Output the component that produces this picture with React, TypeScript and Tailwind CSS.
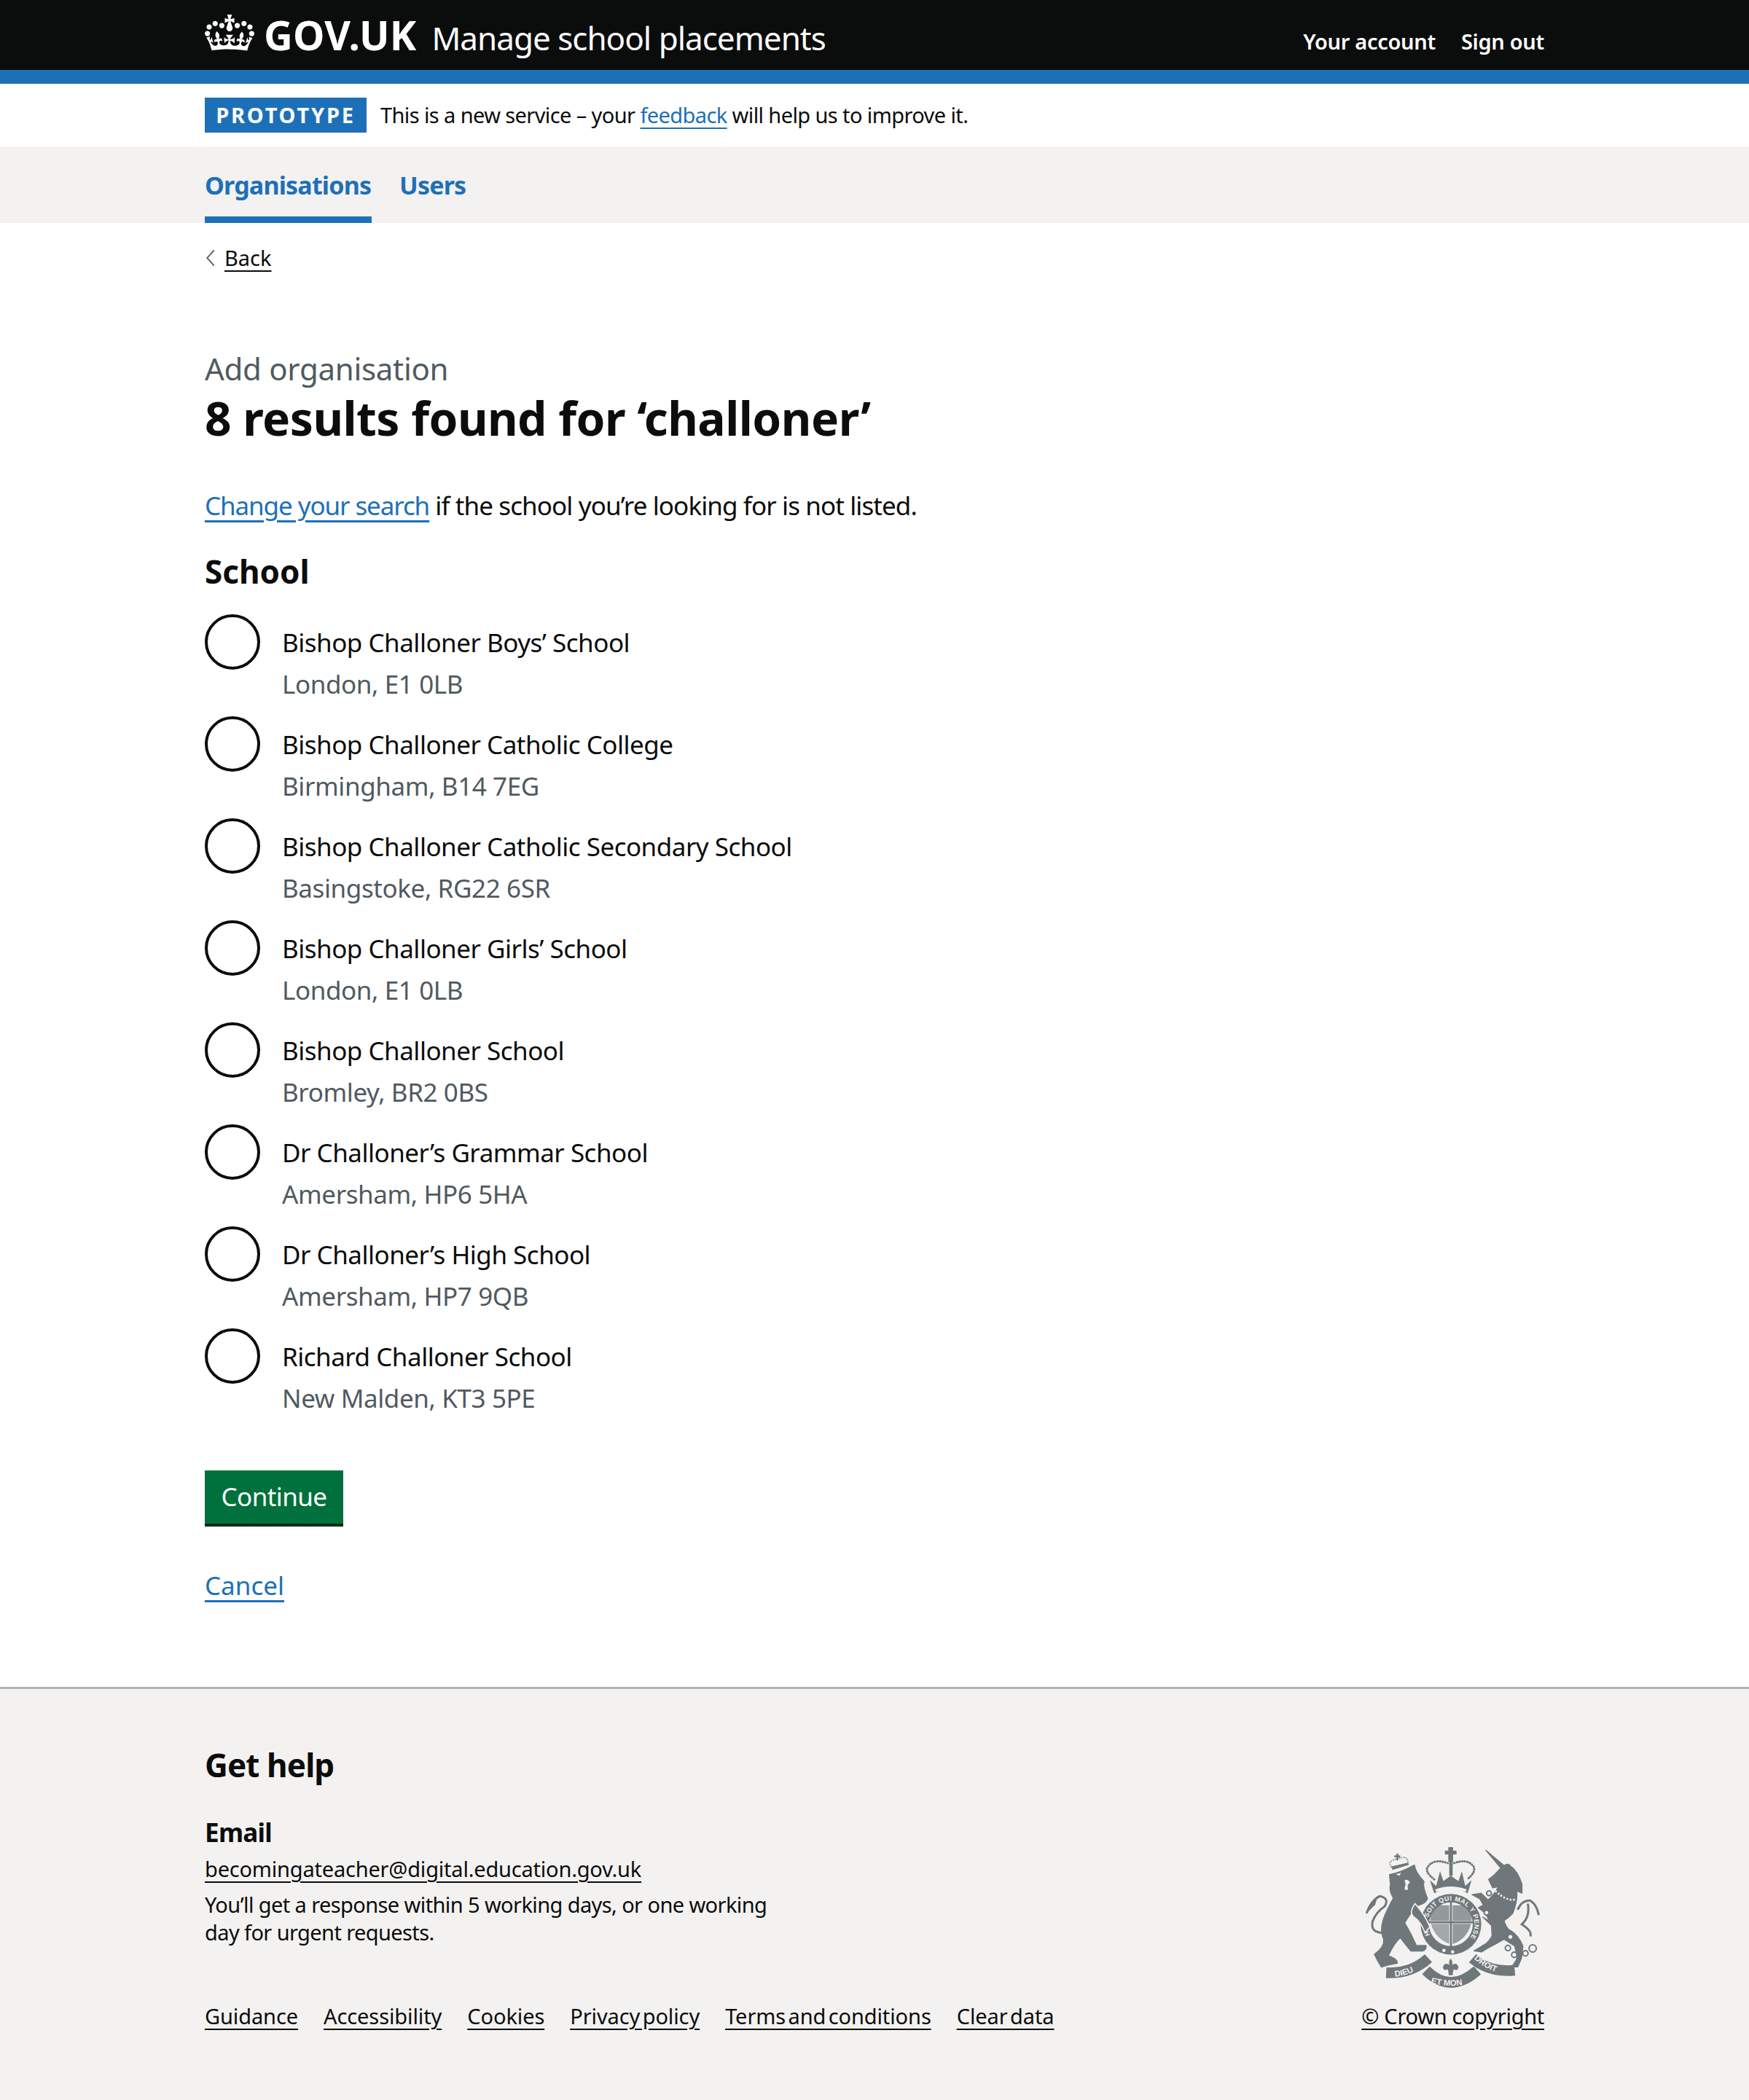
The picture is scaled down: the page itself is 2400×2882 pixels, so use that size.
const schools = [
  { name: "Bishop Challoner Boys’ School", place: "London, E1 0LB" },
  { name: "Bishop Challoner Catholic College", place: "Birmingham, B14 7EG" },
  { name: "Bishop Challoner Catholic Secondary School", place: "Basingstoke, RG22 6SR" },
  { name: "Bishop Challoner Girls’ School", place: "London, E1 0LB" },
  { name: "Bishop Challoner School", place: "Bromley, BR2 0BS" },
  { name: "Dr Challoner’s Grammar School", place: "Amersham, HP6 5HA" },
  { name: "Dr Challoner’s High School", place: "Amersham, HP7 9QB" },
  { name: "Richard Challoner School", place: "New Malden, KT3 5PE" },
];

const footerLinks = ["Guidance", "Accessibility", "Cookies", "Privacy policy", "Terms and conditions", "Clear data"];

function CrownLogo() {
  return (
    <svg viewBox="0 0 132 97" className="w-[68px] h-[50px] shrink-0 self-start mt-[6px]" fill="#fff">
      <path
        fillRule="evenodd"
        d="M25 30.2c3.5 1.5 7.7-.2 9.1-3.7 1.5-3.6-.2-7.8-3.9-9.2-3.6-1.4-7.6.3-9.1 3.9-1.4 3.5.3 7.5 3.9 9zM9 39.5c3.6 1.5 7.8-.2 9.2-3.7 1.5-3.6-.2-7.8-3.9-9.1-3.6-1.5-7.6.2-9.1 3.8-1.4 3.5.3 7.5 3.8 9zM4.4 57.2c3.5 1.5 7.7-.2 9.1-3.8 1.5-3.6-.2-7.7-3.9-9.1-3.5-1.5-7.6.3-9.1 3.8-1.4 3.5.3 7.6 3.9 9.1zm38.3-21.4c3.5 1.5 7.7-.2 9.1-3.8 1.5-3.6-.2-7.7-3.9-9.1-3.6-1.5-7.6.3-9.1 3.8-1.3 3.6.4 7.7 3.9 9.1zm64.4-5.6c-3.6 1.5-7.8-.2-9.1-3.7-1.5-3.6.2-7.8 3.8-9.2 3.6-1.4 7.7.3 9.2 3.9 1.3 3.5-.4 7.5-3.9 9zm15.9 9.3c-3.6 1.5-7.7-.2-9.1-3.7-1.5-3.6.2-7.8 3.7-9.1 3.6-1.5 7.7.2 9.2 3.8 1.5 3.5-.3 7.5-3.8 9zm4.7 17.7c-3.6 1.5-7.8-.2-9.2-3.8-1.5-3.6.2-7.7 3.9-9.1 3.6-1.5 7.7.3 9.2 3.8 1.3 3.5-.4 7.6-3.9 9.1zM89.3 35.8c-3.6 1.5-7.8-.2-9.2-3.8-1.4-3.6.2-7.7 3.9-9.1 3.6-1.5 7.7.3 9.2 3.8 1.4 3.6-.3 7.7-3.9 9.1zM69.7 17.7l8.9 4.7V9.3l-8.9 2.8c-.2-.3-.5-.6-.9-.9L72.4 0H59.6l3.5 11.2c-.3.3-.6.5-.9.9l-8.8-2.8v13.1l8.8-4.7c.3.3.6.7.9.9l-5 15.4v.1c-.2.8-.4 1.6-.4 2.4 0 4.1 3.1 7.5 7 8.1h.2c.3 0 .7.1 1 .1.4 0 .7 0 1-.1h.2c4-.6 7.1-4.1 7.1-8.1 0-.8-.1-1.7-.4-2.4V34l-5.1-15.4c.4-.2.7-.6 1-.9zM66 92.8c16.9 0 32.8 1.1 47.1 3.2 4-16.9 8.9-26.7 14-33.5l-9.6-3.4c1 4.9 1.1 7.2 0 10.2-1.5-1.4-3-4.3-4.2-8.7L108.6 76c2.8-2 5-3.2 7.5-3.3-4.4 9.4-10 11.9-13.6 11.2-4.3-.8-6.3-4.6-5.6-7.9 1-4.7 5.7-5.9 8-.5 4.3-8.7-3-11.4-7.6-8.8 7.1-7.2 7.9-13.5 2.1-21.1-8 6.1-8.1 12.3-4.5 20.8-4.7-5.4-12.1-2.5-9.5 6.2 3.4-5.2 7.9-2 7.2 3.1-.6 4.3-6.4 7.8-13.5 7.2-10.3-.9-10.9-8-11.2-13 2.5-.5 7.1 1.8 11 7.3L80.2 60c-4.1 4.4-8 5.3-12.3 5.4 1.4-4.4 8-11.6 8-11.6H55.5s6.4 7.2 7.9 11.6c-4.2-.1-8-1-12.3-5.4l1.4 16.4c3.9-5.5 8.5-7.7 10.9-7.3-.3 5-.7 12.1-11 13-7.2.6-12.9-2.9-13.5-7.2-.7-5 3.8-8.3 7.1-3.1 2.7-8.7-4.6-11.6-9.4-6.2 3.7-8.5 3.6-14.7-4.6-20.8-5.8 7.6-5 13.9 2.2 21.1-4.7-2.6-11.9.1-7.7 8.8 2.3-5.5 7.1-4.2 8.1.5.7 3.3-1.3 7.1-5.7 7.9-3.5.7-9-1.8-13.5-11.2 2.5.1 4.7 1.3 7.5 3.3l-4.7-15.4c-1.2 4.4-2.7 7.2-4.3 8.7-1.1-3-.9-5.3 0-10.2l-9.5 3.4c5 6.9 9.9 16.7 14 33.5 14.8-2.1 30.8-3.2 47.7-3.2z"
      />
    </svg>
  );
}

function Crest() {
  const ink = "#6f777b";
  const paper = "#f3f2f1";
  return (
    <svg viewBox="87 60 750 610" className="w-[250px] h-[203px]">
      <defs>
        <path id="garter" d="M367 434 A97 97 0 1 1 527 452" />
        <path id="dieu" d="M222 606 Q300 600 362 540" />
        <path id="mon" d="M370 632 Q450 655 540 632" />
        <path id="droit" d="M548 532 Q610 590 690 598" />
      </defs>

      {/* garter and shield */}
      <circle cx="453" cy="390" r="125" fill={ink} />
      <circle cx="453" cy="390" r="90" fill={paper} />
      <g fill={ink}>
        <path d="M376 312 H446 V376 H368 Q368 340 376 312 Z" opacity="0.72" />
        <path d="M460 312 H530 Q540 340 538 376 H460 Z" opacity="0.72" />
        <path d="M370 388 H446 V470 Q390 450 370 388 Z" opacity="0.6" />
        <path d="M460 388 H536 Q520 450 460 472 Z" opacity="0.72" />
        <path d="M449 296 h8 v186 h-8 Z" />
        <path d="M362 378 H544 v8 H362 Z" />
      </g>
      <text fontFamily="Liberation Sans, sans-serif" fontSize="27" fontWeight="700" fill={paper}>
        <textPath href="#garter" textLength="410">HOY SOIT QUI MAL Y PENSE</textPath>
      </text>
      <g fill={paper}>
        <circle cx="424" cy="498" r="7" />
        <circle cx="460" cy="504" r="7" />
      </g>

      {/* lion */}
      <g fill={ink} stroke={ink} strokeWidth="5" strokeLinejoin="round">
        <path d="M200 186 Q250 175 302 146 Q306 176 342 214 Q334 232 356 284 Q346 306 316 312 Q300 322 262 384 Q290 430 310 478 L350 478 Q352 496 336 500 L288 500 Q262 470 245 445 Q222 462 194 520 Q232 532 232 550 L194 558 L166 566 Q150 540 138 514 Q180 484 176 452 Q156 410 182 350 Q200 310 216 282 Q196 250 204 226 Z" />
      </g>
      <path fill={ink} stroke={paper} strokeWidth="5" d="M305 305 Q345 350 366 400 L346 425 Q330 380 298 358 Q280 340 305 305 Z" />
      <path fill="none" stroke={ink} strokeWidth="9" d="M172 425 Q120 425 130 378 Q145 338 180 316 Q200 282 160 274 Q125 290 105 345" />
      <path fill={ink} d="M102 348 Q112 300 150 278 L140 310 Z" />
      <path fill={paper} d="M262 208 q12 -6 22 8 l-10 14 l2 16 q-14 8 -14 -6 l4 -14 Z M226 184 l22 -6 l-8 12 Z" />
      {/* lion crown */}
      <path fill="none" stroke={ink} strokeWidth="6" strokeDasharray="4 5" d="M208 155 Q188 125 232 122 Q278 100 276 142 Z" />
      <path fill={ink} d="M228 98 h8 v8 h8 v8 h-8 v12 h-8 v-12 h-8 v-8 h8 Z" />
      <path fill={ink} d="M208 152 L276 136 L278 146 L212 166 Z" />

      {/* unicorn */}
      <path fill={ink} stroke={ink} strokeWidth="4" strokeLinejoin="round" d="M597 85 L672 148 Q684 140 692 144 Q730 170 746 225 L746 262 L724 252 Q730 290 708 345 Q690 365 672 375 Q680 400 690 410 Q730 430 750 480 L744 530 L728 566 L702 566 Q724 540 726 525 L716 480 L672 452 L640 470 L602 490 L580 504 L548 500 L600 468 Q626 440 622 430 L620 395 L584 360 L612 378 L595 345 L566 322 L586 310 L572 285 L540 268 L578 262 L606 290 Q636 262 648 235 L625 240 L608 205 L632 186 L658 158 Z" />
      <path fill="none" stroke={paper} strokeWidth="8" strokeDasharray="7 7" d="M636 252 Q680 295 718 288" />
      <path fill="none" stroke={ink} strokeWidth="9" d="M728 330 Q745 290 780 292 Q808 310 815 352 M770 305 Q780 360 745 390 Q790 420 780 440" />
      <g fill={paper} stroke={ink} strokeWidth="6">
        <circle cx="610" cy="262" r="10" />
        <circle cx="600" cy="342" r="10" />
        <circle cx="688" cy="488" r="11" />
        <circle cx="714" cy="516" r="11" />
        <circle cx="760" cy="510" r="11" />
        <circle cx="790" cy="490" r="15" />
      </g>
      <g fill={paper}>
        <circle cx="718" cy="408" r="8" />
        <circle cx="698" cy="442" r="8" />
      </g>

      {/* big crown */}
      <path fill={ink} d="M442 72 h20 v14 h14 v16 h-14 v30 h-20 v-30 h-14 v-16 h14 Z" />
      <path fill="none" stroke={ink} strokeWidth="9" strokeDasharray="2 9" strokeLinecap="round" d="M384 205 Q340 170 360 150 Q385 118 440 138 M466 138 Q520 118 545 150 Q560 172 520 205" />
      <path fill={ink} d="M446 132 h14 v58 h-14 Z" />
      <path fill={ink} d="M366 208 L392 232 L408 172 L422 212 L452 190 L484 212 L498 172 L512 232 L538 208 L522 262 Q452 225 384 262 Z" />
      <path fill={paper} d="M388 246 Q452 222 518 246 L514 256 Q452 236 392 256 Z" />

      {/* motto */}
      <g fill="none" stroke={ink} strokeWidth="44">
        <path d="M186 590 Q290 595 360 530" />
        <path d="M350 580 Q450 680 562 580" />
        <path d="M542 530 Q610 590 716 580" />
      </g>
      <path fill={ink} d="M452 532 q12 14 4 26 q20 -14 28 8 q-2 18 -20 10 q-4 10 -4 24 h-16 q0 -14 -4 -24 q-18 8 -20 -10 q8 -22 28 -8 q-8 -12 4 -26 Z" />
      <g fontFamily="Liberation Sans, sans-serif" fontSize="34" fontWeight="700" fill={paper}>
        <text><textPath href="#dieu">DIEU</textPath></text>
        <text><textPath href="#mon">ET MON</textPath></text>
        <text><textPath href="#droit">DROIT</textPath></text>
      </g>
    </svg>
  );
}

export default function App() {
  return (
    <div className="min-h-[2882px] flex flex-col bg-white text-[#0b0c0c] font-['Noto_Sans',sans-serif]">
      <header className="bg-[#0b0c0c] border-b-[19px] border-[#1d70b8] h-[115px] px-[281px] flex justify-between text-white">
        <div className="flex items-baseline h-[96px] pt-[14px]">
          <CrownLogo />
          <span className="ml-[13px] text-[55px] font-bold leading-[68px] tracking-[0.2px]">GOV.UK</span>
          <span className="ml-[21px] text-[44px] leading-[68px] tracking-[-1px]">Manage school placements</span>
        </div>
        <nav className="flex gap-[35px] items-center h-[96px] pt-[18px] text-[29px] font-semibold tracking-[-0.3px]">
          <a>Your account</a>
          <a>Sign out</a>
        </nav>
      </header>

      <div className="h-[86px] px-[281px] flex items-center text-[29px]">
        <strong className="bg-[#1d70b8] text-white h-[48px] w-[222px] flex items-center justify-center font-bold tracking-[2.8px]">PROTOTYPE</strong>
        <p className="ml-[19px] tracking-[-0.6px]">
          This is a new service – your <a className="text-[#1d70b8] underline underline-offset-[6px]">feedback</a> will help us to improve it.
        </p>
      </div>

      <nav className="bg-[#f3f2f1] h-[105px] px-[281px] flex gap-[38px] text-[34px] font-bold text-[#1d70b8] tracking-[-0.8px]">
        <a className="h-full w-[229px] pt-[28px] border-b-[9px] border-[#1d70b8]">Organisations</a>
        <a className="pt-[28px]">Users</a>
      </nav>

      <main className="px-[281px] flex-1">
        <a className="flex items-center mt-[28px] text-[29px] leading-[40px]">
          <svg viewBox="0 0 12 22" className="w-[16px] h-[26px] -mr-[2px]" fill="none" stroke="#505a5f" strokeWidth="1.5">
            <path d="M10 2 L2 11 L10 20" />
          </svg>
          <span className="ml-[13px] underline underline-offset-[6px]">Back</span>
        </a>

        <p className="mt-[104px] text-[42px] leading-[56px] text-[#505a5f] tracking-[-0.3px]">Add organisation</p>
        <h1 className="mt-[2px] text-[64px] leading-[76px] font-bold tracking-[-0.5px]">8 results found for ‘challoner’</h1>

        <p className="mt-[58px] text-[35px] leading-[48px] tracking-[-0.9px]">
          <a className="text-[#1d70b8] underline underline-offset-[7px] tracking-[-1.1px]">Change your search</a> if the school you’re looking for is not listed.
        </p>

        <h2 className="mt-[38px] text-[44px] leading-[56px] font-bold">School</h2>

        <div className="mt-[31px] flex flex-col gap-[18px]">
          {schools.map((s) => (
            <label key={s.name + s.place} className="flex h-[122px]">
              <span className="w-[76px] h-[76px] rounded-full border-[4px] border-[#0b0c0c] shrink-0" />
              <span className="ml-[30px] pt-[15px]">
                <span className="block text-[35px] leading-[48px] tracking-[-0.5px]">{s.name}</span>
                <span className="block mt-[9px] text-[35px] leading-[48px] text-[#505a5f] tracking-[-0.4px]">{s.place}</span>
              </span>
            </label>
          ))}
        </div>

        <button className="mt-[73px] w-[190px] h-[77px] bg-[#00703c] border-b-[4px] border-[#002d18] text-white text-[35px] tracking-[-0.6px] block">Continue</button>

        <p className="mt-[57px] text-[35px] leading-[48px]">
          <a className="text-[#1d70b8] underline underline-offset-[7px]">Cancel</a>
        </p>
      </main>

      <footer className="h-[567px] bg-[#f3f2f1] border-t-[3px] border-[#b1b4b6] px-[281px] flex justify-between items-end pb-[95px]">
        <div className="flex flex-col">
          <h2 className="text-[44px] leading-[56px] font-bold tracking-[-0.9px]">Get help</h2>
          <h3 className="mt-[41px] text-[35px] leading-[48px] font-bold tracking-[-0.7px]">Email</h3>
          <a className="mt-[6px] text-[29px] leading-[40px] underline underline-offset-[6px] tracking-[-0.2px]">becomingateacher@digital.education.gov.uk</a>
          <p className="mt-[10px] w-[800px] text-[29px] leading-[38px] tracking-[-0.6px]">You’ll get a response within 5 working days, or one working day for urgent requests.</p>
          <ul className="mt-[76px] flex gap-[35px] text-[29px] leading-[40px] tracking-[-0.1px] [word-spacing:-4px]">
            {footerLinks.map((l) => (
              <li key={l}>
                <a className="underline underline-offset-[6px]">{l}</a>
              </li>
            ))}
          </ul>
        </div>
        <div className="flex flex-col items-end">
          <Crest />
          <a className="mt-[13px] text-[29px] leading-[40px] underline underline-offset-[6px] tracking-[-0.3px]">© Crown copyright</a>
        </div>
      </footer>
    </div>
  );
}
